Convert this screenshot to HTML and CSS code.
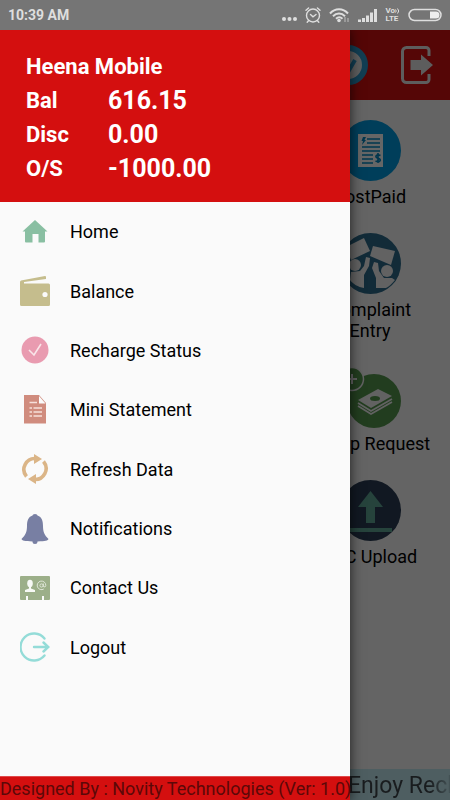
FILE: index.html
```html
<!DOCTYPE html>
<html lang="en">
<head>
<meta charset="utf-8">
<meta name="viewport" content="width=device-width, initial-scale=1">
<title>Heena Mobile</title>
<link rel="stylesheet" href="styles.css">
</head>
<body>
<div class="phone">
  <div class="status">
    <span class="clock">10:39 AM</span>
    <div class="status-icons">
      <svg width="16" height="16" viewBox="0 0 16 16" fill="#dedede"><circle cx="3" cy="12" r="2"/><circle cx="8.500" cy="12" r="2"/><circle cx="14" cy="12" r="2"/></svg>
      <svg width="16" height="16" viewBox="0 0 16 16" fill="none" stroke="#dedede" stroke-width="1.400" stroke-linecap="round"><circle cx="8" cy="8.500" r="6.500"/><path d="M5.500 7.500 8 9.800l3-2.300M1 3.300l2.600-2.300M15 3.300l-2.600-2.300M3.500 13.700l-1.300 1.500M12.500 13.700l1.300 1.500"/></svg>
      <svg width="21" height="16" viewBox="0 0 21 16" fill="none" stroke="#dedede" stroke-width="2"><path d="M1 6.500C6 .800 14 .800 19 6.500M4 9.300c3.500-3.600 8.500-3.600 12 0M7 11.700c2-1.800 4.500-1.800 6.500 0"/><circle cx="10" cy="13.500" r="1.800" fill="#dedede" stroke="none"/><path d="M16 10v5M19 11v4" stroke="#a5a5a5" stroke-width="1.500"/></svg>
      <svg width="19" height="16" viewBox="0 0 19 16" fill="#dedede"><path d="M0 12.500h3V15H0zM4 11h3v4H4zM8 8.500h3V15H8zM12 5.500h3V15h-3zM16 2h3v13h-3z"/></svg>
      <span class="volte"><span>Vo<svg width="5" height="6" viewBox="0 0 5 6" fill="none" stroke="#dedede"><path d="M.5 1.500q1.500 1.500 0 3M2.500.5q2.500 2.500 0 5"/></svg></span><span>LTE</span></span>
      <svg width="34" height="14" viewBox="0 0 34 14"><rect x="1" y="1.500" width="32" height="11" rx="5.500" fill="none" stroke="#dedede" stroke-width="1.500"/><path d="M22 3.500h6a3.500 3.500 0 0 1 0 7h-6z" fill="#eee"/></svg>
    </div>
  </div>

  <div class="stage">
    <main class="home">
      <header class="appbar">
        <svg width="40" height="40" viewBox="0 0 40 40"><circle cx="20" cy="20" r="17" fill="#eee" stroke="#2e9bd0" stroke-width="6"/><path d="m14 20 6 7 7-12" fill="none" stroke="#2e9bd0" stroke-width="4"/></svg>
        <button class="exit" aria-label="Exit"><svg width="34" height="38" viewBox="0 0 34 38"><path d="M28 10V4.500A3 3 0 0 0 25 1.500H5.500a4 4 0 0 0-4 4v27a4 4 0 0 0 4 4H25a3 3 0 0 0 3-3V28" fill="none" stroke="#e8e8e8" stroke-width="3"/><path d="M9.500 14H20V8.500L32 19 20 29.500V24H9.500z" fill="#e8e8e8"/></svg></button>
      </header>
      <div class="services">
        <a class="service" href="#postpaid">
          <svg width="61" height="61" viewBox="0 0 61 61"><circle cx="30.500" cy="30.500" r="30.500" fill="#009ce0"/><path d="M18 14h25v33H18z" fill="#fff"/><path d="M27 19h13M27 23h13M22 27h18M22 31h18M22 35h11M22 39h11M22 43h11" stroke="#0088c4" stroke-width="1.600"/><path d="m23 17 3 0-1.500 3H26l-4 5 1-4h-1.500z" fill="#0088c4"/><path d="M40.500 35.500c-5-2-6 2.300-2.500 2.700 4 .5 2.500 5-2.500 2.800M38 33v10" fill="none" stroke="#0088c4" stroke-width="1.600"/></svg>
          <span>PostPaid</span>
        </a>
        <a class="service" href="#complaint">
          <svg width="61" height="61" viewBox="0 0 61 61"><circle cx="30.500" cy="30.500" r="30.500" fill="#2d6c8d"/><g fill="#f4f4f4"><path d="m6 14 18-9 6 13-19 9z"/><path d="m33 13 22 5-4 14-21-9z"/><circle cx="15" cy="32" r="6"/><circle cx="47" cy="38" r="6"/><path d="m26 24 4 1-1 8-5 9v13c-6-1-11-4-14-8l1-8 9-1 4-5z"/><path d="m34 29 4 1 1 8 5 7h8l3 2c-3 4-7 7-9 8H36V45l-4-10z"/></g></svg>
          <span>Complaint Entry</span>
        </a>
        <a class="service" href="#topup">
          <svg width="61" height="61" viewBox="0 0 61 61"><circle cx="34" cy="34" r="27" fill="#55984f"/><circle cx="12" cy="12" r="11.500" fill="#55984f" stroke="#f4f4f4" stroke-width="1.500"/><path d="M7 12h10M12 7v10" stroke="#f4f4f4" stroke-width="2"/><path d="m18 33 20-11 14 7-21 12z" fill="#f4f4f4"/><ellipse cx="35" cy="31.500" rx="5" ry="2.500" fill="#55984f"/><path d="m18 36 13 8 21-12M18 39l13 8 21-12" fill="none" stroke="#f4f4f4" stroke-width="1.700"/></svg>
          <span>Topup Request</span>
        </a>
        <a class="service" href="#kyc">
          <svg width="61" height="61" viewBox="0 0 61 61"><circle cx="30.500" cy="30.500" r="30.500" fill="#2b3e56"/><path d="m30.500 11 12.500 16h-8v16h-9V27h-8zM9 48h43v4H9z" fill="#60a797"/></svg>
          <span>KYC Upload</span>
        </a>
      </div>
      <p class="ticker">Enjoy Recharge</p>
    </main>

    <div class="scrim"></div>

    <aside class="drawer">
      <header class="account">
        <h1>Heena Mobile</h1>
        <dl>
          <dt>Bal</dt><dd>616.15</dd>
          <dt>Disc</dt><dd>0.00</dd>
          <dt>O/S</dt><dd>-1000.00</dd>
        </dl>
      </header>
      <nav>
        <ul class="menu">
          <li><a href="#home"><svg viewBox="0 0 30 30"><path d="M15 3 27.500 14.500H25V24.500a1 1 0 0 1-1 1h-5.500V17h-6v8.500H6a1 1 0 0 1-1-1V14.500H2.500z" fill="#89bfa2"/></svg>Home</a></li>
          <li><a href="#balance"><svg viewBox="0 0 30 30"><path d="M1 4.500 25 0a1 1 0 0 1 1 1v2L4 6v1.500h24.500A1.500 1.500 0 0 1 30 9v19.500a1.500 1.500 0 0 1-1.500 1.500h-27A1.500 1.500 0 0 1 0 28.500V6q0-1 1-1.500z" fill="#c5bd8d"/><circle cx="25" cy="18.500" r="2.600" fill="#fafafa"/></svg>Balance</a></li>
          <li><a href="#recharge"><svg viewBox="0 0 30 30"><circle cx="15" cy="15" r="13.500" fill="#e99bb0"/><path d="m9 15 5 5 7-11" fill="none" stroke="#f9e5e9" stroke-width="1.600"/></svg>Recharge Status</a></li>
          <li><a href="#statement"><svg viewBox="0 0 30 30"><path d="M4 0h15l7 8v20.500H4z" fill="#d08c7e"/><path d="M19 1v7.500h6.500z" fill="#fafafa"/><path d="M9.500 7.500H17M9.500 13H12M13.500 13H22M9.500 17H12M13.500 17H22M9.500 21H12M13.500 21H22" stroke="#f6dfda" stroke-width="1.700"/></svg>Mini Statement</a></li>
          <li><a href="#refresh"><svg viewBox="0 0 30 30"><path d="M6.500 22.500A11 11 0 0 1 16 4.500M23.500 7.500A11 11 0 0 1 14 25.500" fill="none" stroke="#dbb587" stroke-width="3.600"/><path d="m14 0 8 5-8 5zM16 30l-8-5 8-5z" fill="#dbb587"/></svg>Refresh Data</a></li>
          <li><a href="#notifications"><svg viewBox="0 0 30 30"><path d="M12.500 1.500a2.500 1.500 0 0 1 5 0C22 3 23 7 23 12c0 6 1.500 9 5.500 13-.500 1.800-3 2-11 2.500a2.500 2.500 0 0 1-5 0c-8-.5-10.500-.7-11-2.500C5.500 21 7 18 7 12c0-5 1-9 5.500-10.500z" fill="#787fa3"/></svg>Notifications</a></li>
          <li><a href="#contact"><svg viewBox="0 0 30 30"><path d="M1 3h28a1 1 0 0 1 1 1v22a1 1 0 0 1-1 1h-5v-4h-2v4H8v-4H6v4H1a1 1 0 0 1-1-1V4a1 1 0 0 1 1-1z" fill="#9caf89"/><ellipse cx="10" cy="10.500" rx="2.800" ry="3.700" fill="#f7f9f5"/><path d="M9 13h2v2.500l4 1.500v2H5v-2l4-1.500z" fill="#f7f9f5"/><circle cx="21.500" cy="12.500" r="1.600" fill="none" stroke="#dfe6d8"/><path d="M23.300 10.500v3q2 1.500 2.500-1a4.300 4.300 0 1 0-2 3.500" fill="none" stroke="#dfe6d8"/></svg>Contact Us</a></li>
          <li><a href="#logout"><svg viewBox="0 0 30 30"><path d="M24.500 6.500a13.500 13.500 0 1 0 0 17" fill="none" stroke="#94dcd8" stroke-width="2.400" stroke-linecap="round"/><path d="M14 15h14M23.500 10.500 28.300 15l-4.800 4.500" fill="none" stroke="#94dcd8" stroke-width="2.400" stroke-linecap="round"/></svg>Logout</a></li>
        </ul>
      </nav>
      <footer class="credit">Designed By : Novity Technologies (Ver: 1.0)</footer>
    </aside>
  </div>
</div>
</body>
</html>
```

FILE: styles.css
```css
* {
  box-sizing: border-box;
  margin: 0;
  padding: 0;
}

body {
  font-family: Roboto, "Liberation Sans", sans-serif;
  font-size: 18px;
  color: #000;
  background: #fafafa;
}

a {
  color: inherit;
  text-decoration: none;
}

svg {
  display: block;
  flex: none;
}

.phone {
  display: flex;
  flex-direction: column;
  min-height: 100vh;
}

/* system status bar */
.status {
  display: flex;
  align-items: center;
  justify-content: space-between;
  height: 30px;
  padding: 0 8px;
  background: #757575;
  color: #dedede;
}

.clock {
  font-size: 14px;
  font-weight: 700;
}

.status-icons {
  display: flex;
  align-items: center;
  gap: 8px;
}

.volte {
  display: flex;
  flex-direction: column;
  font-size: 8px;
  font-weight: 700;
  line-height: 8px;
}

.volte span {
  display: flex;
  align-items: center;
}

/* screen below the status bar */
.stage {
  position: relative;
  display: flex;
  flex: 1;
  overflow: hidden;
}

.home {
  display: flex;
  flex: 1;
  flex-direction: column;
}

.appbar {
  display: flex;
  align-items: center;
  justify-content: flex-end;
  gap: 33px;
  height: 70px;
  padding: 0 15px;
  background: #d40f0f;
}

.exit {
  border: 0;
  background: none;
}

.services {
  display: flex;
  flex: 1;
  flex-direction: column;
  align-self: flex-end;
  gap: 26px;
  width: 160px;
  padding: 20px 16px;
}

.service {
  display: flex;
  flex-direction: column;
  align-items: center;
  gap: 5px;
  line-height: 21px;
  text-align: center;
  white-space: nowrap;
}

.service[href="#complaint"] span {
  width: min-content;
  white-space: normal;
}

.ticker {
  align-self: flex-end;
  width: 102px;
  height: 31px;
  overflow: hidden;
  color: transparent;
  background: linear-gradient(to right, #3f474d 80%, #a9cdd5) text, #c3eaf2;
  font-size: 23px;
  line-height: 34px;
  white-space: nowrap;
}

.scrim {
  position: absolute;
  inset: 0;
  background: rgba(0, 0, 0, .6);
}

/* navigation drawer */
.drawer {
  position: absolute;
  inset: 0 100px 0 0;
  display: flex;
  flex-direction: column;
  background: #fafafa;
  box-shadow: 0 0 12px rgba(0, 0, 0, .7);
}

.account {
  padding: 20px 26px 16px;
  background: #d40f0f;
  color: #fff;
  font-size: 22px;
  font-weight: 700;
  line-height: 34px;
}

.account h1 {
  font-size: 22px;
}

.account dl {
  display: grid;
  grid-template-columns: 82px 1fr;
}

.account dd {
  font-size: 25px;
}

nav {
  flex: 1;
}

.menu {
  display: grid;
  grid-auto-rows: 1fr;
  height: 475px;
  list-style: none;
}

.menu a {
  display: flex;
  align-items: center;
  gap: 20px;
  height: 100%;
  padding: 0 20px;
}

.menu svg {
  width: 30px;
  height: 30px;
}

.credit {
  height: 24px;
  border-top: 1px solid #e0494b;
  background: #d40f0f;
  color: #5c0808;
  font-size: 18px;
  line-height: 24px;
  text-align: center;
  white-space: nowrap;
}
```
